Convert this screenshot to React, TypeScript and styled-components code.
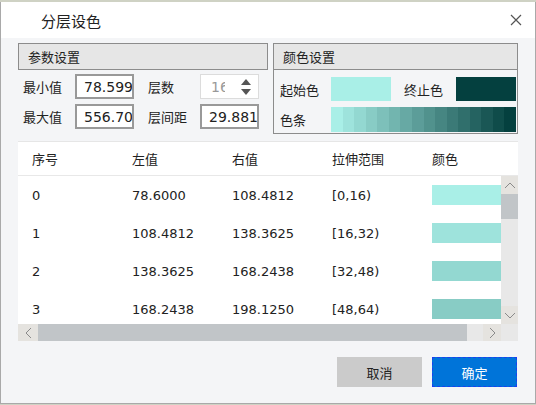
import React from "react";
import styled, { createGlobalStyle } from "styled-components";

const Global = createGlobalStyle`
  html, body { margin: 0; padding: 0; }
  body {
    background: #cfd2c4;
    font-family: "DejaVu Sans", "Noto Sans CJK SC", sans-serif;
    color: #222;
  }
  * { box-sizing: border-box; }
`;

const Dialog = styled.div`
  margin-top: 2px;
  width: 536px;
  height: 402px;
  background: #f4f5f7;
  border: 1px solid #a9a9a9;
  border-top: none;
  display: flex;
  flex-direction: column;
`;

const TitleBar = styled.div`
  height: 36px;
  background: #fff;
  display: flex;
  align-items: center;
  justify-content: space-between;
  padding: 0 12px 0 40px;
  font-family: "Noto Sans CJK SC", sans-serif;
  font-size: 15px;
  color: #222;
`;

const CloseBtn = styled.button`
  border: none;
  background: transparent;
  padding: 0;
  width: 14px;
  height: 14px;
  display: flex;
  align-items: center;
  justify-content: center;
`;

const Body = styled.div`
  flex: 1;
  display: flex;
  flex-direction: column;
  padding: 5px 17px 0 17px;
`;

const TopRow = styled.div`
  display: flex;
  gap: 5px;
  height: 91px;
`;

const ParamGroup = styled.section`
  width: 250px;
  flex: none;
  display: flex;
  flex-direction: column;
`;

const ColorGroup = styled.section`
  flex: 1;
  min-width: 0;
  border: 1px solid #8c8c8c;
  display: flex;
  flex-direction: column;
`;

const GroupHeader = styled.div<{ $boxed?: boolean }>`
  height: ${(p) => (p.$boxed ? "27px" : "26px")};
  background: #e6e6e6;
  border: ${(p) => (p.$boxed ? "1px solid #8c8c8c" : "none")};
  border-bottom: 1px solid #8c8c8c;
  display: flex;
  align-items: center;
  padding-left: 9px;
  font-family: "Noto Sans CJK SC", sans-serif;
  font-size: 13px;
  color: #222;
`;

const ParamGrid = styled.div`
  display: grid;
  grid-template-columns: 38px 59px 38px 59px;
  column-gap: 14px;
  row-gap: 5px;
  grid-auto-rows: 25px;
  padding: 4px 0 0 5px;
  align-items: center;
`;

const Label = styled.span`
  font-family: "Noto Sans CJK SC", sans-serif;
  font-size: 13px;
  color: #222;
  white-space: nowrap;
`;

const NumInput = styled.input`
  width: 59px;
  height: 25px;
  border: 2px solid #999;
  background: #fff;
  padding: 0 0 0 7px;
  font-family: "DejaVu Sans", sans-serif;
  font-size: 14px;
  color: #222;
  outline: none;
`;

const Spinner = styled.div`
  width: 59px;
  height: 25px;
  border: 1px solid #dcdcdc;
  background: #fff;
  display: flex;
  align-items: center;
`;

const SpinText = styled.input`
  width: 24px;
  height: 100%;
  border: none;
  background: transparent;
  padding: 0 0 0 10px;
  font-family: "DejaVu Sans", sans-serif;
  font-size: 14px;
  color: #999;
  outline: none;
`;

const SpinArrows = styled.div`
  flex: 1;
  display: flex;
  flex-direction: column;
  align-items: center;
  justify-content: center;
  gap: 4px;
  padding-left: 8px;
`;

const ColorBody = styled.div`
  display: grid;
  grid-template-columns: 51px 60px 65px 60px;
  grid-template-rows: 24px 25px;
  row-gap: 6px;
  padding: 7px 0 0 6px;
  align-items: center;
`;

const Swatch = styled.div<{ $c: string }>`
  width: 60px;
  height: 24px;
  background: ${(p) => p.$c};
`;

const LabelCell = styled(Label)<{ $indent?: number }>`
  padding-left: ${(p) => p.$indent ?? 0}px;
`;

const Ramp = styled.div`
  grid-column: 2 / span 3;
  height: 25px;
  display: flex;
`;

const RampStep = styled.div<{ $c: string }>`
  flex: 1;
  background: ${(p) => p.$c};
`;

const Table = styled.div`
  margin-top: 7px;
  height: 200px;
  background: #fff;
  border-top: 1px solid #e6e6e6;
  display: flex;
  flex-direction: column;
`;

const HeadRow = styled.div`
  height: 34px;
  flex: none;
  display: grid;
  grid-template-columns: repeat(5, 100px);
  align-items: center;
  border-bottom: 1px solid #e8e8e8;
  font-family: "Noto Sans CJK SC", sans-serif;
  font-size: 13px;
  color: #222;
`;

const Cell = styled.div`
  padding-left: 14px;
  white-space: nowrap;
  overflow: hidden;
`;

const ScrollArea = styled.div`
  flex: 1;
  display: grid;
  grid-template-columns: 1fr 17px;
  grid-template-rows: 1fr 17px;
  min-height: 0;
`;

const Viewport = styled.div`
  overflow: hidden;
  min-height: 0;
`;

const Row = styled.div`
  height: 38px;
  display: grid;
  grid-template-columns: repeat(4, 100px) 1fr;
  align-items: center;
  font-family: "DejaVu Sans", "Noto Sans CJK SC", sans-serif;
  font-size: 13px;
  color: #222;
`;

const RowSwatch = styled.div<{ $c: string }>`
  margin-left: 14px;
  height: 20px;
  background: ${(p) => p.$c};
`;

const VScroll = styled.div`
  background: #e8e8e8;
  display: flex;
  flex-direction: column;
`;

const HScroll = styled.div`
  background: #e8e8e8;
  display: flex;
`;

const ScrollBtn = styled.div<{ $w?: number; $h?: number }>`
  flex: none;
  width: ${(p) => (p.$w ? `${p.$w}px` : "auto")};
  height: ${(p) => (p.$h ? `${p.$h}px` : "auto")};
  background: #e5e3df;
  display: flex;
  align-items: center;
  justify-content: center;
`;

const Thumb = styled.div<{ $w?: number; $h?: number }>`
  flex: none;
  width: ${(p) => (p.$w ? `${p.$w}px` : "auto")};
  height: ${(p) => (p.$h ? `${p.$h}px` : "auto")};
  background: #c1c5c8;
`;

const Spacer = styled.div`
  flex: 1;
`;

const Corner = styled.div`
  background: #e8e8e8;
`;

const Footer = styled.div`
  display: flex;
  justify-content: flex-end;
  gap: 10px;
  padding: 16px 1px 0 0;
`;

const Button = styled.button<{ $primary?: boolean }>`
  width: 85px;
  height: 30px;
  border: ${(p) => (p.$primary ? "1px dashed #1b3ff0" : "none")};
  background: ${(p) => (p.$primary ? "#0074d9" : "#cbcbcb")};
  color: ${(p) => (p.$primary ? "#fff" : "#222")};
  font-family: "Noto Sans CJK SC", sans-serif;
  font-size: 13px;
  padding: 0;
`;

const start = [169, 239, 231];
const end = [4, 64, 63];
const ramp = Array.from({ length: 16 }, (_, i) => {
  const t = i / 15;
  const c = start.map((s, k) => Math.round(s + (end[k] - s) * t));
  return `rgb(${c[0]},${c[1]},${c[2]})`;
});

const rows = [
  ["0", "78.6000", "108.4812", "[0,16)"],
  ["1", "108.4812", "138.3625", "[16,32)"],
  ["2", "138.3625", "168.2438", "[32,48)"],
  ["3", "168.2438", "198.1250", "[48,64)"],
];

const Chevron = ({ dir }: { dir: "up" | "down" | "left" | "right" }) => {
  const pts: Record<string, string> = {
    up: "1,7 6,2 11,7",
    down: "1,2 6,7 11,2",
    left: "7,1 2,6 7,11",
    right: "2,1 7,6 2,11",
  };
  const horiz = dir === "left" || dir === "right";
  return (
    <svg width={horiz ? 9 : 12} height={horiz ? 12 : 9} viewBox={horiz ? "0 0 9 12" : "0 0 12 9"}>
      <polyline points={pts[dir]} fill="none" stroke="#8a8a8a" strokeWidth="1" />
    </svg>
  );
};

const Tri = ({ up }: { up?: boolean }) => (
  <svg width="10" height="6" viewBox="0 0 10 6">
    <polygon points={up ? "0,6 5,0 10,6" : "0,0 10,0 5,6"} fill="#555" />
  </svg>
);

export default function App() {
  return (
    <>
      <Global />
      <Dialog>
        <TitleBar>
          <span>分层设色</span>
          <CloseBtn aria-label="close">
            <svg width="12" height="12" viewBox="0 0 12 12">
              <path d="M1 1 L11 11 M11 1 L1 11" stroke="#555" strokeWidth="1.2" />
            </svg>
          </CloseBtn>
        </TitleBar>
        <Body>
          <TopRow>
            <ParamGroup>
              <GroupHeader $boxed>参数设置</GroupHeader>
              <ParamGrid>
                <Label>最小值</Label>
                <NumInput readOnly value="78.59999" />
                <Label>层数</Label>
                <Spinner>
                  <SpinText readOnly value="16" />
                  <SpinArrows>
                    <Tri up />
                    <Tri />
                  </SpinArrows>
                </Spinner>
                <Label>最大值</Label>
                <NumInput readOnly value="556.7000" />
                <Label>层间距</Label>
                <NumInput readOnly value="29.88125" />
              </ParamGrid>
            </ParamGroup>
            <ColorGroup>
              <GroupHeader>颜色设置</GroupHeader>
              <ColorBody>
                <Label>起始色</Label>
                <Swatch $c={ramp[0]} />
                <LabelCell $indent={13}>终止色</LabelCell>
                <Swatch $c={ramp[15]} />
                <Label>色条</Label>
                <Ramp>
                  {ramp.map((c) => (
                    <RampStep key={c} $c={c} />
                  ))}
                </Ramp>
              </ColorBody>
            </ColorGroup>
          </TopRow>
          <Table>
            <HeadRow>
              <Cell>序号</Cell>
              <Cell>左值</Cell>
              <Cell>右值</Cell>
              <Cell>拉伸范围</Cell>
              <Cell>颜色</Cell>
            </HeadRow>
            <ScrollArea>
              <Viewport>
                {rows.map((r, i) => (
                  <Row key={r[0]}>
                    <Cell>{r[0]}</Cell>
                    <Cell>{r[1]}</Cell>
                    <Cell>{r[2]}</Cell>
                    <Cell>{r[3]}</Cell>
                    <RowSwatch $c={ramp[i]} />
                  </Row>
                ))}
              </Viewport>
              <VScroll>
                <ScrollBtn $h={18}>
                  <Chevron dir="up" />
                </ScrollBtn>
                <Thumb $h={25} />
                <Spacer />
                <ScrollBtn $h={18}>
                  <Chevron dir="down" />
                </ScrollBtn>
              </VScroll>
              <HScroll>
                <ScrollBtn $w={20}>
                  <Chevron dir="left" />
                </ScrollBtn>
                <Thumb $w={429} />
                <Spacer />
                <ScrollBtn $w={18}>
                  <Chevron dir="right" />
                </ScrollBtn>
              </HScroll>
              <Corner />
            </ScrollArea>
          </Table>
          <Footer>
            <Button>取消</Button>
            <Button $primary>确定</Button>
          </Footer>
        </Body>
      </Dialog>
    </>
  );
}
